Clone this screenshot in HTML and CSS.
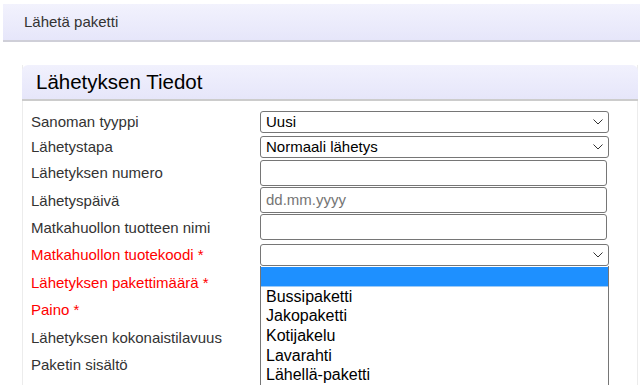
FILE: index.html
```html
<!DOCTYPE html>
<html lang="fi">
<head>
    <meta charset="UTF-8">
    <title>Lähetä paketti</title>
    <link rel="stylesheet" href="styles.css">
</head>
<body>
    <div class="topbar">Lähetä paketti</div>

    <div class="panel">
        <div class="panel-head">Lähetyksen Tiedot</div>
        <div class="panel-body">
            <div class="row short">
                <label>Sanoman tyyppi</label>
                <div class="select">Uusi<svg width="10" height="6" viewBox="0 0 10 6"><path d="M0.5 0.5 L5 5 L9.5 0.5" fill="none" stroke="#333" stroke-width="1"/></svg></div>
            </div>
            <div class="row short">
                <label>Lähetystapa</label>
                <div class="select">Normaali lähetys<svg width="10" height="6" viewBox="0 0 10 6"><path d="M0.5 0.5 L5 5 L9.5 0.5" fill="none" stroke="#333" stroke-width="1"/></svg></div>
            </div>
            <div class="row">
                <label>Lähetyksen numero</label>
                <div class="input"></div>
            </div>
            <div class="row">
                <label>Lähetyspäivä</label>
                <div class="input placeholder">dd.mm.yyyy</div>
            </div>
            <div class="row">
                <label>Matkahuollon tuotteen nimi</label>
                <div class="input"></div>
            </div>
            <div class="row">
                <label class="required">Matkahuollon tuotekoodi *</label>
                <div class="select-wrap">
                    <div class="select">&nbsp;<svg width="10" height="6" viewBox="0 0 10 6"><path d="M0.5 0.5 L5 5 L9.5 0.5" fill="none" stroke="#333" stroke-width="1"/></svg></div>
                    <ul class="dropdown">
                        <li class="active">&nbsp;</li>
                        <li>Bussipaketti</li>
                        <li>Jakopaketti</li>
                        <li>Kotijakelu</li>
                        <li>Lavarahti</li>
                        <li>Lähellä-paketti</li>
                    </ul>
                </div>
            </div>
            <div class="row">
                <label class="required">Lähetyksen pakettimäärä *</label>
                <div class="input"></div>
            </div>
            <div class="row">
                <label class="required">Paino *</label>
                <div class="input"></div>
            </div>
            <div class="row">
                <label>Lähetyksen kokonaistilavuus</label>
                <div class="input"></div>
            </div>
            <div class="row">
                <label>Paketin sisältö</label>
                <div class="input"></div>
            </div>
        </div>
    </div>
</body>
</html>
```

FILE: styles.css
```css
body {
    margin: 4px 0 0 3px;
    font-family: "Liberation Sans", Arial, sans-serif;
    background: #fff;
    overflow: hidden;
}
.topbar {
    height: 36px;
    line-height: 36px;
    padding-left: 21px;
    font-size: 15px;
    color: #333;
    background: linear-gradient(#f2f2fd, #e6e6fa);
    border-bottom: 2px solid #cfcfd8;
}
.panel {
    margin: 23px 2px 0 19px;
    border-left: 1px solid #ececec;
    border-right: 1px solid #ececec;
}
.panel-head {
    height: 34px;
    line-height: 34px;
    padding-left: 14px;
    font-size: 20.5px;
    color: #000;
    background: linear-gradient(#f1f1fd, #e6e6fa);
    border-bottom: 2px solid #cccccc;
    border-radius: 6px 6px 0 0;
    margin-left: -1px;
    margin-right: -1px;
}
.panel-body {
    padding: 8px 0 20px 8px;
}
.row {
    display: flex;
    align-items: center;
    height: 27.4px;
}
.row.short {
    height: 25px;
}
.row label {
    width: 229px;
    flex-shrink: 0;
    font-size: 15px;
    color: #333;
}
.row label.required {
    color: #f00;
}
.select,
.input {
    box-sizing: border-box;
    border: 1px solid #767676;
    border-radius: 3px;
    font-size: 15px;
    color: #000;
    padding-left: 5px;
    background: #fff;
}
.select {
    width: 349px;
    height: 22px;
    display: flex;
    align-items: center;
    justify-content: space-between;
    padding-right: 5px;
}
.input {
    width: 347px;
    height: 26px;
    line-height: 24px;
}
.input.placeholder {
    color: #757575;
}
.select-wrap {
    position: relative;
}
.dropdown {
    position: absolute;
    top: 22px;
    left: 0;
    width: 349px;
    box-sizing: border-box;
    margin: 0;
    padding: 0;
    list-style: none;
    background: #fff;
    border: 1px solid #767676;
    border-top: none;
    z-index: 2;
}
.dropdown li {
    height: 19.6px;
    line-height: 19.6px;
    padding-left: 5px;
    font-size: 16px;
    color: #000;
}
.dropdown li.active {
    background: #1e90ff;
    border-bottom: 1px solid #9ccaf7;
    height: 19px;
    margin-top: 1px;
}
```
